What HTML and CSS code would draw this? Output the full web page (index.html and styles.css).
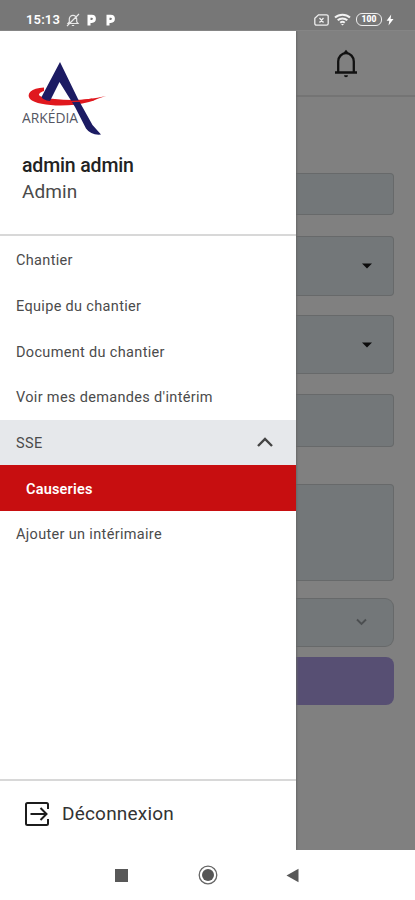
FILE: index.html
```html
<!DOCTYPE html>
<html lang="fr">
<head>
<meta charset="utf-8">
<title>Arkédia</title>
<link rel="stylesheet" href="styles.css">
</head>
<body>
<div class="phone">
  <header class="status">
    <span class="time">15:13</span>
    <svg class="mute" width="14" height="14" viewBox="0 0 14 14" fill="none" stroke="#e8e8e8" stroke-width="1.2"><path d="M2 10.500h10l-1.300-1.600V6a3.700 3.700 0 0 0-7.400 0v2.900zM5.800 12.500h2.400M1 13 13 1"/></svg>
    <svg class="park" width="11" height="12" viewBox="0 0 11 12"><path d="M3 11.500V2.200h2.800a2.400 2.400 0 0 1 0 5.200H3" fill="none" stroke="#fff" stroke-width="3"/></svg>
    <svg class="park second" width="11" height="12" viewBox="0 0 11 12"><path d="M3 11.500V2.200h2.800a2.400 2.400 0 0 1 0 5.200H3" fill="none" stroke="#fff" stroke-width="3"/></svg>
    <svg class="sim" width="15" height="12" viewBox="0 0 15 12" fill="none" stroke="#eee" stroke-width="1.3"><path d="M4.500.8h8a1.700 1.700 0 0 1 1.700 1.700v7a1.700 1.700 0 0 1-1.700 1.700h-10A1.700 1.700 0 0 1 .8 9.500V4.300zM5.500 4l4 4.500M9.500 4l-4 4.500"/></svg>
    <svg class="wifi" width="17" height="13" viewBox="0 0 17 13" fill="none" stroke="#f2f2f2" stroke-width="2"><path d="M1 4.600a11 11 0 0 1 15 0M3.700 7.300a7 7 0 0 1 9.600 0M6.300 9.700a3.400 3.400 0 0 1 4.400 0"/><path d="m7 11 1.500 1.500L10 11z" fill="#f2f2f2" stroke="none"/></svg>
    <span class="battery">100</span>
    <svg class="bolt" width="8" height="12" viewBox="0 0 8 12"><path d="M5.200.5.600 6.800h2.700L2.500 11.500l5-6.500H4.600z" fill="#fff"/></svg>
  </header>
  <main class="app">
    <aside class="drawer">
      <section class="profile">
        <svg class="logo" width="86" height="76" viewBox="0 0 86 76">
          <path d="M22 26.500C9 27 4 33 8 38c7 7 38 9 59 3 6-1.700 10-4 17-6-17 4-34 5-51 3C16 37 13 33 22 30z" fill="#e0181e"/>
          <path d="M38 1 56 38l14.500 26 8.500 9.500q-10 1-15-6L53 46 37.500 21 28 40q-7-1-8.500-4z" fill="#1c1b63"/>
          <path d="M24 38.500q22 5 48 .7L70 37.500q-24 4.500-46 1z" fill="#e0181e"/>
          <text x="0" y="62" textLength="56" lengthAdjust="spacingAndGlyphs">ARKÉDIA</text>
        </svg>
        <div class="name">admin admin</div>
        <div class="role">Admin</div>
      </section>
      <nav class="menu">
        <a class="item">Chantier</a>
        <a class="item">Equipe du chantier</a>
        <a class="item">Document du chantier</a>
        <a class="item">Voir mes demandes d'intérim</a>
        <a class="item group">SSE
          <svg width="18" height="12" viewBox="0 0 18 12" fill="none" stroke="#444" stroke-width="2.400"><path d="m2 9 7-7 7 7"/></svg>
        </a>
        <a class="item active">Causeries</a>
        <a class="item">Ajouter un intérimaire</a>
      </nav>
      <footer class="logout">
        <svg width="26" height="26" viewBox="0 0 26 26" fill="none" stroke="#1c1c1c" stroke-width="2"><path d="M24 8V3.500Q24 2 22.500 2h-19Q2 2 2 3.500v19Q2 24 3.500 24h19q1.500 0 1.500-1.500V18M6.500 13h16M16.500 7l6 6-6 6"/></svg>
        <span>Déconnexion</span>
      </footer>
    </aside>
    <section class="page">
      <div class="topbar">
        <svg width="24" height="29" viewBox="0 0 24 29"><path d="M1 23.500h22M4.200 23V12.500a7.800 8.300 0 0 1 15.600 0V23" fill="none" stroke="#111" stroke-width="2.300"/><path d="M8.500 5 12 .8 15.500 5zM10 26.200h4a2 2 0 0 1-4 0z" fill="#111"/></svg>
      </div>
      <div class="form">
        <div class="field short"></div>
        <div class="field select first"><svg width="10" height="6" viewBox="0 0 10 6"><path d="M0 .5h10L5 5.500z" fill="#0c0c0c"/></svg></div>
        <div class="field select"><svg width="10" height="6" viewBox="0 0 10 6"><path d="M0 .5h10L5 5.500z" fill="#0c0c0c"/></svg></div>
        <div class="field medium"></div>
        <div class="field area"></div>
        <div class="field picker"><svg width="11" height="8" viewBox="0 0 11 8" fill="none" stroke="#4c4f51" stroke-width="1.900"><path d="m1 1.500 4.500 4.500L10 1.500"/></svg></div>
        <div class="submit"></div>
      </div>
    </section>
  </main>
  <footer class="system">
    <svg width="13" height="13"><rect width="13" height="13" fill="#585858"/></svg>
    <svg class="home" width="20" height="20" viewBox="0 0 20 20"><circle cx="10" cy="10" r="8.800" fill="none" stroke="#666" stroke-width="1.300"/><circle cx="10" cy="10" r="6" fill="#555"/></svg>
    <svg class="back" width="13" height="15" viewBox="0 0 13 15"><path d="M12.500.8v13.400L.5 7.500z" fill="#585858"/></svg>
  </footer>
</div>
</body>
</html>
```
FILE: styles.css
```css
* { box-sizing: border-box; }
body { margin: 0; font-family: Roboto, sans-serif; background: #fff; }
svg { display: block; flex: none; }
.phone { width: 415px; height: 900px; display: flex; flex-direction: column; overflow: hidden; }
.status { height: 31px; flex: none; background: #777; border-bottom: 1px solid #858585; display: flex; align-items: center; padding: 9px 21px 0 26px; color: #fff; }
.time { width: 34px; font-size: 13px; font-weight: 600; letter-spacing: .15px; white-space: nowrap; }
.mute { margin-left: 6px; }
.park { margin-left: 6px; }
.park.second { margin-left: 8px; }
.sim { margin-left: auto; }
.wifi { margin-left: 5px; }
.battery { margin-left: 5px; width: 26px; height: 13px; border: 1.500px solid #eee; border-radius: 6px; font-size: 8.500px; line-height: 10px; font-weight: 900; text-align: center; }
.bolt { margin-left: 4px; }
.app { height: 819px; flex: none; display: grid; grid-template-columns: 296px 1fr; }
.drawer { background: #fff; display: flex; flex-direction: column; box-shadow: 1px 0 2px #666; z-index: 1; clip-path: inset(0 -4px 0 0); }
.profile { height: 205px; padding: 30px 22px 0; border-bottom: 2px solid #d8d8d8; }
.logo text { font: 14.500px "Open Sans", sans-serif; fill: #555663; }
.name { margin-top: 16px; font-size: 19.500px; line-height: 26px; font-weight: 500; color: #222; letter-spacing: -.15px; }
.role { font-size: 19px; line-height: 26px; color: #4a4a4a; letter-spacing: .1px; }
.menu { padding-top: 1px; color: #4b4b4b; }
.item { height: 45.700px; display: flex; align-items: center; justify-content: space-between; padding: 2px 22px 0 16px; font-size: 14.500px; letter-spacing: .33px; white-space: nowrap; }
.group { background: #e6e8eb; }
.group svg { margin-top: -2px; }
.active { background: #c70e10; color: #fff; font-weight: 600; padding-left: 26px; letter-spacing: .2px; }
.logout { margin-top: auto; height: 71px; border-top: 2px solid #d8d8d8; display: flex; align-items: center; gap: 12px; padding: 0 24px 4px; font-size: 19px; color: #333; letter-spacing: .2px; }
.page { background: #808080; }
.topbar { height: 66px; border-bottom: 2px solid #747474; padding: 18px 0 0 38px; }
.form { padding: 76px 21px 0 0; }
.field { background: #737779; border: 1px solid #67696a; border-left: 0; border-radius: 0 4px 4px 0; display: flex; align-items: center; justify-content: flex-end; }
.short { height: 42px; }
.select { height: 59px; margin-top: 19px; padding-right: 21px; }
.select.first { height: 60px; margin-top: 21px; }
.medium { height: 53px; margin-top: 20px; }
.area { height: 97px; margin-top: 37px; }
.picker { height: 49px; margin-top: 17px; border-radius: 0 9px 9px 0; padding: 0 26px 2px 0; }
.submit { height: 48px; margin-top: 10px; border-radius: 0 8px 8px 0; background: #574f73; }
.system { height: 50px; display: flex; align-items: center; padding-left: 115px; }
.home { margin-left: 70px; }
.back { margin-left: 68px; }
```
